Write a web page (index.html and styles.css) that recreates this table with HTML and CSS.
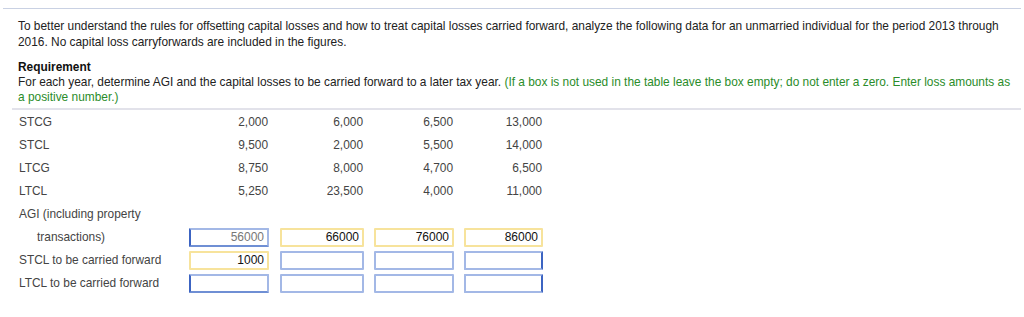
FILE: index.html
```html
<!DOCTYPE html>
<html>
<head>
  <title>Capital Losses</title>
  <link rel="stylesheet" href="styles.css">
</head>
<body>
  <div class="question">
    <p class="intro">To better understand the rules for offsetting capital losses and how to treat capital losses carried forward, analyze the following data for an unmarried individual for the period 2013 through 2016. No capital loss carryforwards are included in the figures.</p>

    <div class="requirement">
      <strong>Requirement</strong>
      <p>For each year, determine AGI and the capital losses to be carried forward to a later tax year. <span class="hint">(If a box is not used in the table leave the box empty; do not enter a zero. Enter loss amounts as a positive number.)</span></p>
    </div>
  </div>

  <div class="grid">
    <div class="label">STCG</div>
    <div class="num">2,000</div><div class="num">6,000</div><div class="num">6,500</div><div class="num">13,000</div>

    <div class="label">STCL</div>
    <div class="num">9,500</div><div class="num">2,000</div><div class="num">5,500</div><div class="num">14,000</div>

    <div class="label">LTCG</div>
    <div class="num">8,750</div><div class="num">8,000</div><div class="num">4,700</div><div class="num">6,500</div>

    <div class="label">LTCL</div>
    <div class="num">5,250</div><div class="num">23,500</div><div class="num">4,000</div><div class="num">11,000</div>

    <div class="label wide">AGI (including property</div>

    <div class="label indent">transactions)</div>
    <div class="cell"><input class="box w80 dark-left muted" value="56000"></div>
    <div class="cell"><input class="box w84 filled" value="66000"></div>
    <div class="cell"><input class="box w80 filled" value="76000"></div>
    <div class="cell"><input class="box w79 filled" value="86000"></div>

    <div class="label">STCL to be carried forward</div>
    <div class="cell"><input class="box w80 filled" value="1000"></div>
    <div class="cell"><input class="box w84" value=""></div>
    <div class="cell"><input class="box w80" value=""></div>
    <div class="cell"><input class="box w79 dark-right" value=""></div>

    <div class="label">LTCL to be carried forward</div>
    <div class="cell"><input class="box w80 dark-left" value=""></div>
    <div class="cell"><input class="box w84" value=""></div>
    <div class="cell"><input class="box w80" value=""></div>
    <div class="cell"><input class="box w79 dark-right" value=""></div>
  </div>
</body>
</html>
```

FILE: styles.css
```css
body {
  margin: 0;
  font-family: "Liberation Sans", Arial, sans-serif;
  font-size: 11.9px;
  color: #222;
  background: #fff;
}
.question {
  margin: 8px 3px 0 3px;
  border-top: 1px solid #c9d1e3;
  padding: 9px 8px 0 15px;
}
.intro {
  margin: 0;
  line-height: 16px;
}
.requirement {
  margin-top: 10px;
  line-height: 15px;
}
.requirement strong {
  display: block;
  color: #111;
}
.requirement p {
  margin: 0;
}
.hint {
  color: #2a8c2a;
}
.grid {
  margin: 3px 3px 0 12px;
  border-top: 2px solid #e2e2ea;
  padding-left: 7px;
  display: grid;
  grid-template-columns: 160px 90px 95px 90px 89px;
  grid-auto-rows: 23px;
  color: #444;
}
.label, .num, .cell {
  display: flex;
  align-items: center;
}
.label.wide {
  grid-column: 1 / -1;
}
.label.indent {
  padding-left: 18px;
}
.num, .cell {
  justify-content: flex-end;
}
.num {
  padding-right: 1px;
}
.box {
  box-sizing: border-box;
  height: 19px;
  margin: 1px 0 0 0;
  padding: 0 3px;
  font-family: "Liberation Sans", Arial, sans-serif;
  font-size: 12px;
  color: #111;
  text-align: right;
  background: #fff;
  border: 2px solid #a3b8e6;
  border-radius: 1px;
  outline: none;
}
.box.filled {
  border-color: #f7e39c;
}
.box.muted {
  color: #777;
}
.box.dark-left {
  border-left-color: #3c64c2;
  border-bottom-color: #6f8fd4;
}
.box.dark-right {
  border-right-color: #3c64c2;
}
.w80 { width: 80px; }
.w84 { width: 84px; }
.w79 { width: 79px; }
```
